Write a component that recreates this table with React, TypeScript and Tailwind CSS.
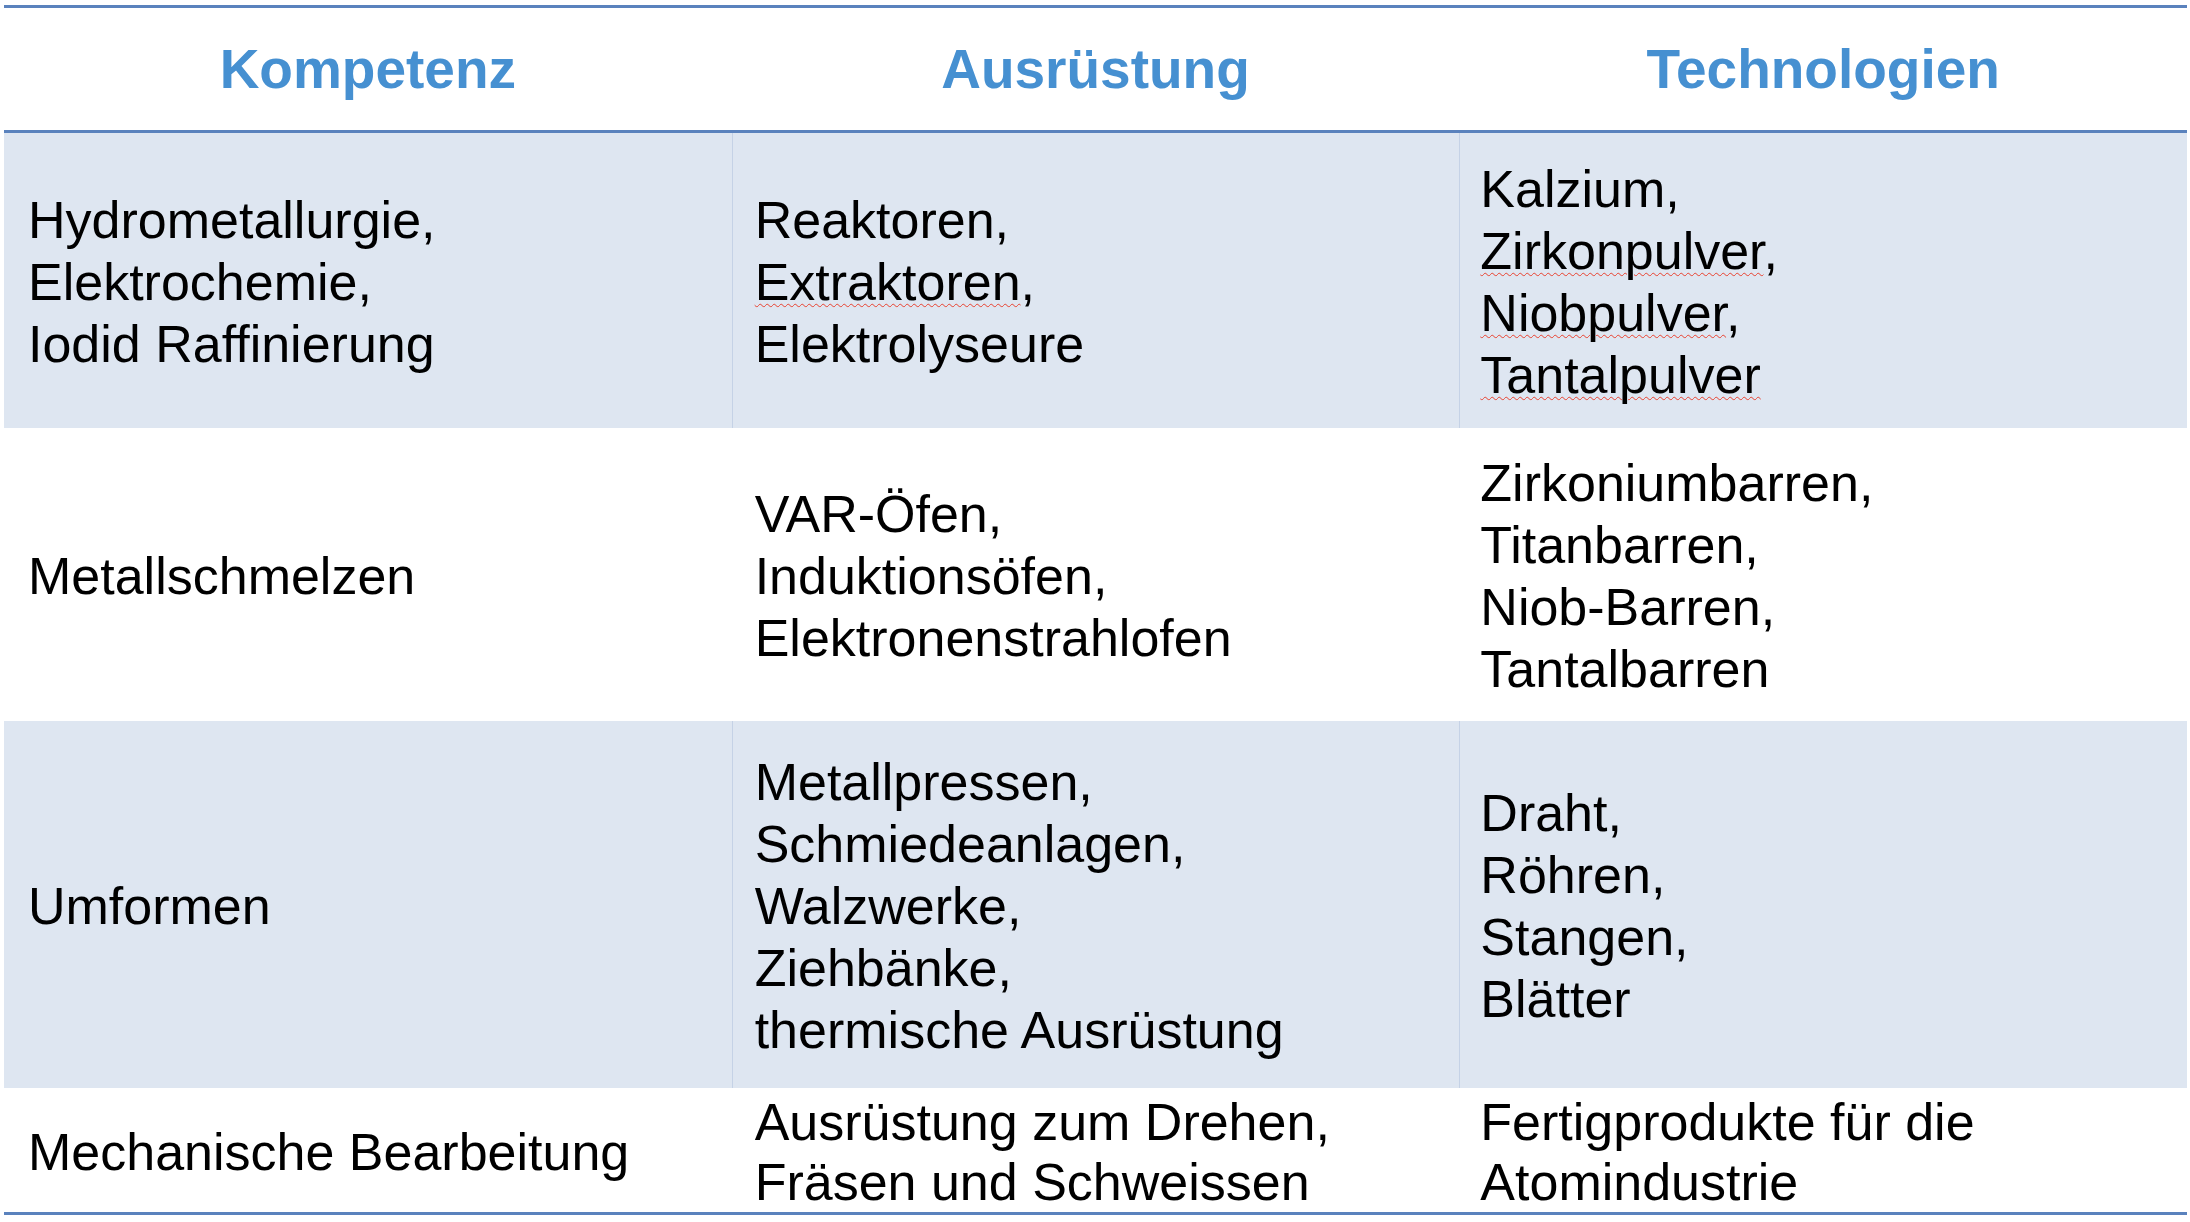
import React from 'react';

// Competence / equipment / technology overview table
type Line = { text: string; typo?: boolean; tail?: string };

interface RowData {
  height: string;
  shaded: boolean;
  pad: string;
  cells: Line[][];
}

const l = (text: string, typo = false, tail = ''): Line => ({ text, typo, tail });

const rows: RowData[] = [
  {
    height: 'h-[295px]',
    shaded: true,
    pad: 'pt-[2px] leading-[62px]',
    cells: [
      [l('Hydrometallurgie,'), l('Elektrochemie,'), l('Iodid Raffinierung')],
      [l('Reaktoren,'), l('Extraktoren', true, ','), l('Elektrolyseure')],
      [l('Kalzium,'), l('Zirkonpulver', true, ','), l('Niobpulver', true, ','), l('Tantalpulver', true)],
    ],
  },
  {
    height: 'h-[293px]',
    shaded: false,
    pad: 'pt-[2px] leading-[62px]',
    cells: [
      [l('Metallschmelzen')],
      [l('VAR-Öfen,'), l('Induktionsöfen,'), l('Elektronenstrahlofen')],
      [l('Zirkoniumbarren,'), l('Titanbarren,'), l('Niob-Barren,'), l('Tantalbarren')],
    ],
  },
  {
    height: 'h-[367px]',
    shaded: true,
    pad: 'pt-[3px] leading-[62px]',
    cells: [
      [l('Umformen')],
      [
        l('Metallpressen,'),
        l('Schmiedeanlagen,'),
        l('Walzwerke,'),
        l('Ziehbänke,'),
        l('thermische Ausrüstung'),
      ],
      [l('Draht,'), l('Röhren,'), l('Stangen,'), l('Blätter')],
    ],
  },
  {
    height: 'h-[124px]',
    shaded: false,
    pad: 'pt-[3px] leading-[60px]',
    cells: [
      [l('Mechanische Bearbeitung')],
      [l('Ausrüstung zum Drehen,'), l('Fräsen und Schweissen')],
      [l('Fertigprodukte für die'), l('Atomindustrie')],
    ],
  },
];

const headers = ['Kompetenz', 'Ausrüstung', 'Technologien'];

const CellText: React.FC<{ lines: Line[] }> = ({ lines }) => (
  <div className="flex flex-col">
    {lines.map((line, i) => (
      <div key={i} className="whitespace-nowrap">
        {line.typo ? (
          <span className="underline decoration-wavy decoration-[#e8412f] decoration-1 underline-offset-[3px]">
            {line.text}
          </span>
        ) : (
          line.text
        )}
        {line.tail}
      </div>
    ))}
  </div>
);

export default function App() {
  return (
    <div
      className="w-[2190px] h-[1222px] bg-white overflow-hidden pt-[5px] pl-[4px] pr-[3px]"
      style={{ fontFamily: '"Liberation Sans", Arial, sans-serif' }}
    >
      <div className="border-t-[3px] border-b-[3px] border-[#5a82bd]">
        {/* header */}
        <div className="grid grid-cols-3 h-[125px] border-b-[3px] border-[#5a82bd]">
          {headers.map((h) => (
            <div key={h} className="flex items-center justify-center">
              <span className="text-[55px] font-bold text-[#4690d1] leading-none">{h}</span>
            </div>
          ))}
        </div>

        {rows.map((row, ri) => (
          <div
            key={ri}
            className={`grid grid-cols-3 ${row.height} ${row.shaded ? 'bg-[#dee6f1]' : 'bg-white'}`}
          >
            {row.cells.map((cell, ci) => (
              <div
                key={ci}
                className={`flex items-center min-h-0 text-[52px] text-black ${row.pad} ${
                  ci === 0 ? 'pl-[24px]' : ci === 1 ? 'pl-[22px] border-l' : 'pl-[20px] border-l'
                } ${row.shaded ? 'border-[#c5d2e6]' : 'border-transparent'}`}
              >
                <CellText lines={cell} />
              </div>
            ))}
          </div>
        ))}
      </div>
    </div>
  );
}
